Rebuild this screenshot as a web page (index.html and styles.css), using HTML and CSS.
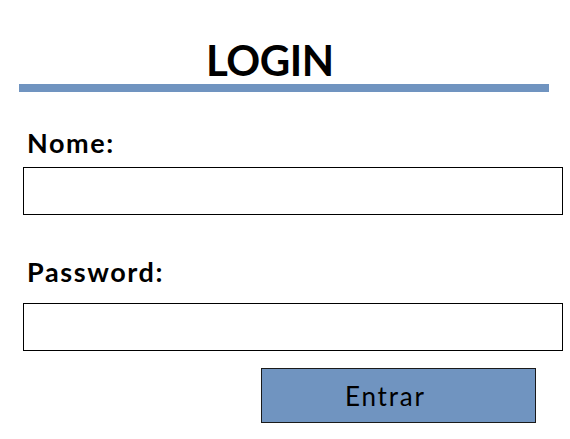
FILE: index.html
```html
<!DOCTYPE html>
<html lang="pt">
<head>
<meta charset="utf-8">
<title>Login</title>
<link rel="stylesheet" href="styles.css">
</head>
<body>
<div class="page">
  <h1 class="title">LOGIN</h1>
  <div class="bar"></div>
  <form class="form">
    <label class="label label-nome" for="nome">Nome:</label>
    <input class="field field-nome" id="nome" type="text">
    <label class="label label-pass" for="pass">Password:</label>
    <input class="field field-pass" id="pass" type="password">
    <button class="btn" type="button">Entrar</button>
  </form>
</div>
</body>
</html>
```
FILE: styles.css
```css
html, body {
  margin: 0;
  padding: 0;
  background: #ffffff;
}
.page {
  width: 570px;
  height: 439px;
  font-family: Lato, "Liberation Sans", sans-serif;
  color: #000;
  padding-top: 39px;
  box-sizing: border-box;
}
.title {
  margin: 0 0 0 206px;
  font-size: 42px;
  line-height: 42px;
  font-weight: 700;
  height: 42px;
  letter-spacing: -0.5px;
}
.bar {
  margin: 3px 0 0 19px;
  width: 530px;
  height: 8px;
  background: #7094c0;
}
.form {
  display: flex;
  flex-direction: column;
  align-items: flex-start;
  margin: 0;
}
.label {
  display: block;
  margin-left: 27px;
  font-size: 27px;
  line-height: 27px;
  height: 27px;
  font-weight: 700;
  letter-spacing: 1.6px;
}
.label-nome { margin-top: 37px; }
.label-pass { margin-top: 43px; }
.field {
  display: block;
  box-sizing: border-box;
  margin-left: 23px;
  width: 540px;
  height: 48px;
  border: 1px solid #000;
  border-radius: 0;
  padding: 0;
  background: #fff;
  outline: none;
}
.field-nome { margin-top: 11px; }
.field-pass { margin-top: 18px; }
.btn {
  display: block;
  box-sizing: border-box;
  margin: 17px 0 0 261px;
  width: 275px;
  height: 55px;
  padding: 0 0 0 83px;
  text-align: left;
  background: #7094c0;
  border: 1px solid #1a1a1a;
  border-radius: 0;
  font-family: Lato, "Liberation Sans", sans-serif;
  font-size: 26px;
  line-height: 26px;
  font-weight: 400;
  letter-spacing: 1.8px;
  color: #000;
}
```
